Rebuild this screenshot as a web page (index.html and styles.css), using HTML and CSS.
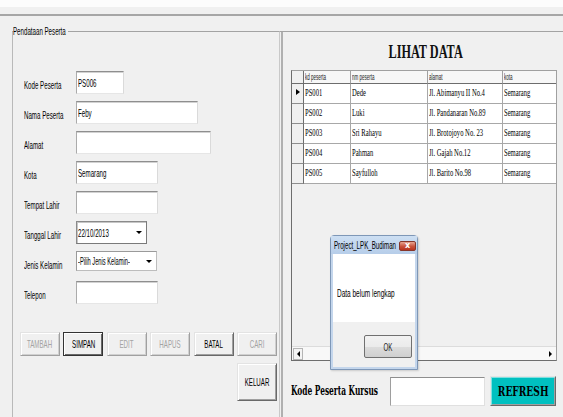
FILE: index.html
```html
<!DOCTYPE html>
<html lang="id">
<head>
<meta charset="utf-8">
<title>Pendataan Peserta</title>
<link rel="stylesheet" href="styles.css">
</head>
<body>
  <div class="topband"></div>
  <div class="menubar"></div>
  <div class="toolbar"></div>

  <div class="main">
    <fieldset class="group">
      <legend class="legend"><span class="t">Pendataan Peserta</span></legend>

      <div class="form">
        <span class="lbl"><span class="t">Kode Peserta</span></span>
        <div class="box w-kode"><span class="val"><span class="t">PS006</span></span></div>

        <span class="lbl"><span class="t">Nama Peserta</span></span>
        <div class="box w-nama"><span class="val"><span class="t">Feby</span></span></div>

        <span class="lbl"><span class="t">Alamat</span></span>
        <div class="box w-alamat"></div>

        <span class="lbl"><span class="t">Kota</span></span>
        <div class="box w-kota"><span class="val"><span class="t">Semarang</span></span></div>

        <span class="lbl"><span class="t">Tempat Lahir</span></span>
        <div class="box w-kota"></div>

        <span class="lbl"><span class="t">Tanggal Lahir</span></span>
        <div class="box date"><span class="val"><span class="t">22/10/2013</span></span><i class="drop"></i></div>

        <span class="lbl"><span class="t">Jenis Kelamin</span></span>
        <div class="box combo"><span class="val"><span class="t">-Pilih Jenis Kelamin-</span></span><i class="drop"></i></div>

        <span class="lbl"><span class="t">Telepon</span></span>
        <div class="box w-kota"></div>
      </div>

      <div class="btnrow">
        <button class="btn off"><span class="t tc">TAMBAH</span></button>
        <button class="btn def"><span class="t tc">SIMPAN</span></button>
        <button class="btn off"><span class="t tc">EDIT</span></button>
        <button class="btn off"><span class="t tc">HAPUS</span></button>
        <button class="btn"><span class="t tc">BATAL</span></button>
        <button class="btn off"><span class="t tc">CARI</span></button>
      </div>
      <div class="exitrow">
        <button class="btn tall"><span class="t tc">KELUAR</span></button>
      </div>
    </fieldset>

    <div class="splitter"></div>

    <section class="viewer">
      <h1 class="title"><span class="tt">LIHAT DATA</span></h1>

      <div class="grid">
        <div class="dg">
          <div class="rh"></div>
          <div class="ch"><span class="h">kd peserta</span></div>
          <div class="ch"><span class="h">nm peserta</span></div>
          <div class="ch"><span class="h">alamat</span></div>
          <div class="ch last"><span class="h">kota</span></div>

          <div class="rh"><i class="cur"></i></div>
          <div class="cell"><span class="s">PS001</span></div>
          <div class="cell"><span class="s">Dede</span></div>
          <div class="cell"><span class="s">Jl. Abimanyu II No.4</span></div>
          <div class="cell last"><span class="s">Semarang</span></div>

          <div class="rh"></div>
          <div class="cell"><span class="s">PS002</span></div>
          <div class="cell"><span class="s">Luki</span></div>
          <div class="cell"><span class="s">Jl. Pandanaran No.89</span></div>
          <div class="cell last"><span class="s">Semarang</span></div>

          <div class="rh"></div>
          <div class="cell"><span class="s">PS003</span></div>
          <div class="cell"><span class="s">Sri Rahayu</span></div>
          <div class="cell"><span class="s">Jl. Brotojoyo No. 23</span></div>
          <div class="cell last"><span class="s">Semarang</span></div>

          <div class="rh"></div>
          <div class="cell"><span class="s">PS004</span></div>
          <div class="cell"><span class="s">Pahman</span></div>
          <div class="cell"><span class="s">Jl. Gajah No.12</span></div>
          <div class="cell last"><span class="s">Semarang</span></div>

          <div class="rh"></div>
          <div class="cell"><span class="s">PS005</span></div>
          <div class="cell"><span class="s">Sayfulloh</span></div>
          <div class="cell"><span class="s">Jl. Barito No.98</span></div>
          <div class="cell last"><span class="s">Semarang</span></div>
        </div>
        <div class="fill"></div>
        <div class="hscroll">
          <span class="sb-btn"><i class="sb-left"></i></span>
          <span class="sb-track"></span>
          <span class="sb-btn plain"><i class="sb-right"></i></span>
        </div>
      </div>

      <div class="search">
        <span class="slabel"><span class="st">Kode Peserta Kursus</span></span>
        <div class="sinput"></div>
        <button class="btn refresh"><span class="rt">REFRESH</span></button>
      </div>
    </section>
  </div>

  <div class="msgbox">
    <div class="msg-title">
      <span class="val"><span class="t">Project_LPK_Budiman</span></span>
      <span class="msg-close">x</span>
    </div>
    <div class="msg-body"><span class="t">Data belum lengkap</span></div>
    <div class="msg-foot"><button class="msg-ok"><span class="t tc">OK</span></button></div>
  </div>
</body>
</html>
```

FILE: styles.css
```css
* { box-sizing: border-box; }

html, body { margin: 0; padding: 0; }

body {
  position: relative;
  width: 563px;
  height: 417px;
  overflow: hidden;
  background: #f0f0f0;
  font-family: "Liberation Sans", Arial, sans-serif;
  font-size: 11px;
  color: #000;
}

/* narrow UI text */
.t {
  display: inline-block;
  white-space: nowrap;
  transform: scaleX(.56);
  transform-origin: 0 50%;
}
.tc { transform-origin: 50% 50%; }

/* value slot inside a field: text may not push the dropdown arrow */
.val {
  flex: 1;
  min-width: 0;
  display: flex;
  align-items: center;
}

/* window chrome */
.topband { height: 7px; background: #fcfcfc; }
.menubar { height: 9px; border-bottom: 2px solid #a6a6a6; }
.toolbar { height: 9px; }

.main {
  display: flex;
  height: 392px;
}

/* ---------- left: data entry group ---------- */
.group {
  flex: none;
  width: 268px;
  height: 410px;
  min-width: 0;
  margin: 0 0 0 12px;
  padding: 0 0 0 7px;
  border: 1px solid #c9c9c9;
  border-top-color: #a3a3a3;
  border-left-color: #b9b9b9;
}

.legend {
  width: 55px;
  height: 12px;
  margin-left: -7px;
  padding: 0;
  line-height: 12px;
  font-size: 11px;
}

.form {
  display: grid;
  grid-template-columns: 56px auto;
  grid-auto-rows: 23px;
  row-gap: 7px;
  align-items: center;
  justify-items: start;
  margin-top: 34px;
}

.lbl { padding: 5px 0 0 4px; }

.box {
  display: flex;
  align-items: center;
  height: 23px;
  padding-left: 1px;
  background: #fff;
  border: 1px solid;
  border-color: #8e8e8e #dadada #e6e6e6 #ababab;
  box-shadow: inset 0 1px 0 #d2d2d2;
}
.w-kode { width: 48px; }
.w-nama { width: 122px; }
.w-alamat { width: 135px; }
.w-kota { width: 82px; }

.date {
  width: 71px;
  border-color: #8a8a8a #7a7a7a #7a7a7a #8a8a8a;
  box-shadow: inset 1px 1px 0 #c6c6c6;
}
.combo {
  width: 81px;
  height: 20px;
  align-self: start;
  border-color: #9a9a9a #bdbdbd #bdbdbd #9a9a9a;
  box-shadow: none;
}
.combo .t { transform: scaleX(.52); }

.drop {
  flex: none;
  margin-right: 4px;
  width: 0;
  height: 0;
  border-left: 3px solid transparent;
  border-right: 3px solid transparent;
  border-top: 3px solid #000;
}

/* buttons */
.btnrow {
  display: flex;
  justify-content: space-between;
  width: 257px;
  margin-top: 28px;
}
.exitrow {
  display: flex;
  justify-content: flex-end;
  width: 257px;
  margin-top: 7px;
}

.btn {
  display: flex;
  align-items: center;
  justify-content: center;
  width: 40px;
  height: 24px;
  padding: 0;
  font: 11px "Liberation Sans", Arial, sans-serif;
  color: #000;
  background: #f0f0f0;
  border: 1px solid;
  border-color: #e3e3e3 #696969 #696969 #e3e3e3;
  box-shadow: inset 1px 1px 0 #fff, inset -1px -1px 0 #a0a0a0;
}
.btn.off {
  color: #a3a3a3;
  border-color: #e3e3e3 #a0a0a0 #a0a0a0 #e3e3e3;
  box-shadow: inset 1px 1px 0 #fff, inset -1px -1px 0 #d0d0d0;
}
.btn.def {
  border-color: #333;
  box-shadow: inset 1px 1px 0 #fff, inset -1px -1px 0 #696969;
}
.btn.tall { height: 38px; }

/* splitter bar between panes */
.splitter {
  flex: none;
  width: 4px;
  margin-top: 6px;
  border-top: 1px solid #a3a3a3;
  background: linear-gradient(to right, #f0f0f0 0 1px, #b0b0b0 1px 3px, #f0f0f0 3px);
}

/* ---------- right: data viewer ---------- */
.viewer {
  flex: 1;
  margin-top: 6px;
  padding: 0 8px 0 7px;
  border-top: 1px solid #a3a3a3;
}

.title {
  margin: 10px 0 8px;
  padding-left: 3px;
  text-align: center;
  font: bold 18px/20px "Liberation Serif", "Times New Roman", serif;
  color: #111;
}
.tt {
  display: inline-block;
  transform: scaleX(.68);
  transform-origin: 50% 50%;
}

.grid {
  display: flex;
  flex-direction: column;
  width: 266px;
  height: 291px;
  overflow: hidden;
  background: #f0f0f0;
  border: 1px solid;
  border-color: #a0a0a0 #a0a0a0 #6d6d6d #6d6d6d;
}

.dg {
  display: grid;
  grid-template-columns: 12px 47px 77px 75px 53px;
  grid-template-rows: 13px repeat(5, 20px);
}

.rh {
  display: flex;
  align-items: center;
  justify-content: center;
  background: #f0f0f0;
  border-right: 1px solid #6d6d6d;
  border-bottom: 1px solid #8d8d8d;
}
.dg > .rh:first-child { border-bottom-color: #6d6d6d; }

.cur {
  width: 0;
  height: 0;
  margin: -3px 0 0 1px;
  border-top: 3px solid transparent;
  border-bottom: 3px solid transparent;
  border-left: 4px solid #000;
}

.ch {
  display: flex;
  align-items: flex-start;
  padding: 1px 0 0 1px;
  background: #f7f7f7;
  border-right: 1px solid #a0a0a0;
  border-bottom: 1px solid #6d6d6d;
  font-size: 9px;
  line-height: 10px;
  color: #222;
}
.h {
  display: inline-block;
  white-space: nowrap;
  transform: scaleX(.5);
  transform-origin: 0 50%;
}

.cell {
  display: flex;
  align-items: center;
  padding: 0 0 3px 1px;
  background: #fff;
  border-right: 1px solid #a8a8a8;
  border-bottom: 1px solid #a8a8a8;
  font: 11px "Liberation Serif", "Times New Roman", serif;
}
.s {
  display: inline-block;
  white-space: nowrap;
  transform: scaleX(.6);
  transform-origin: 0 50%;
}
.ch.last, .cell.last { border-right: 0; }

.fill { flex: 1; }

.hscroll {
  display: flex;
  align-items: center;
  height: 14px;
  padding: 0 1px;
  background: #f8f8f8;
  border-top: 1px solid #dcdcdc;
}
.sb-btn {
  display: flex;
  align-items: center;
  justify-content: center;
  width: 10px;
  height: 12px;
  border: 1px solid #b5b5b5;
  background: #f4f4f4;
}
.sb-btn.plain { border-color: transparent; background: transparent; }
.sb-track { flex: 1; }
.sb-left, .sb-right {
  width: 0;
  height: 0;
  border-top: 3px solid transparent;
  border-bottom: 3px solid transparent;
}
.sb-left { border-right: 3px solid #000; }
.sb-right { border-left: 3px solid #000; }

.search {
  display: flex;
  align-items: center;
  gap: 5px;
  margin-top: 15px;
}
.slabel {
  flex: none;
  width: 94px;
  font: bold 12px "DejaVu Serif", "Liberation Serif", serif;
}
.st, .rt {
  display: inline-block;
  white-space: nowrap;
  transform: scaleX(.62);
  transform-origin: 0 50%;
}
.rt { transform: scaleX(.7); transform-origin: 50% 50%; }

.sinput {
  width: 95px;
  height: 29px;
  background: #fff;
  border: 1px solid;
  border-color: #8e8e8e #e0e0e0 #e0e0e0 #9e9e9e;
}

.btn.refresh {
  width: 66px;
  height: 30px;
  background: #00c0c0;
  font: bold 13px "DejaVu Serif", "Liberation Serif", serif;
  color: #000;
  box-shadow: inset 1px 1px 0 #7fe0e0, inset -1px -1px 0 #a0a0a0;
}

/* ---------- message box ---------- */
.msgbox {
  position: absolute;
  left: 330px;
  top: 235px;
  width: 88px;
  height: 135px;
  display: flex;
  flex-direction: column;
  padding: 0 2px 2px;
  background: #c4d6ec;
  border: 1px solid #7e97b7;
  border-radius: 4px 4px 0 0;
  box-shadow: 1px 1px 2px rgba(0, 0, 0, .15);
}
.msg-title {
  display: flex;
  align-items: center;
  height: 18px;
  margin: 0 -2px;
  padding: 0 1px 0 3px;
  background: linear-gradient(#cddff3, #b6cde9);
}
.msg-title .t { transform: scaleX(.56); }
.msg-close {
  flex: none;
  display: flex;
  align-items: center;
  justify-content: center;
  width: 17px;
  height: 10px;
  margin-top: 1px;
  border: 1px solid #86352a;
  border-radius: 2px;
  background: linear-gradient(#e7a593, #c9523c 55%, #b8331f);
  color: #fff;
  font: bold 8px/8px "DejaVu Sans", sans-serif;
}
.msg-body {
  height: 68px;
  padding: 33px 0 0 4px;
  line-height: 12px;
  background: #fff;
}
.msg-body .t { transform: scaleX(.59); }
.msg-foot {
  flex: 1;
  display: flex;
  justify-content: flex-end;
  align-items: flex-start;
  padding: 13px 3px 0 0;
  background: #f0f0f0;
}
.msg-ok {
  display: flex;
  align-items: center;
  justify-content: center;
  width: 48px;
  height: 23px;
  padding: 0;
  font: 11px "Liberation Sans", Arial, sans-serif;
  color: #222;
  border: 1px solid #707070;
  border-radius: 2px;
  background: linear-gradient(#f2f2f2, #ebebeb 50%, #dddddd 50%, #cfcfcf);
}
```
